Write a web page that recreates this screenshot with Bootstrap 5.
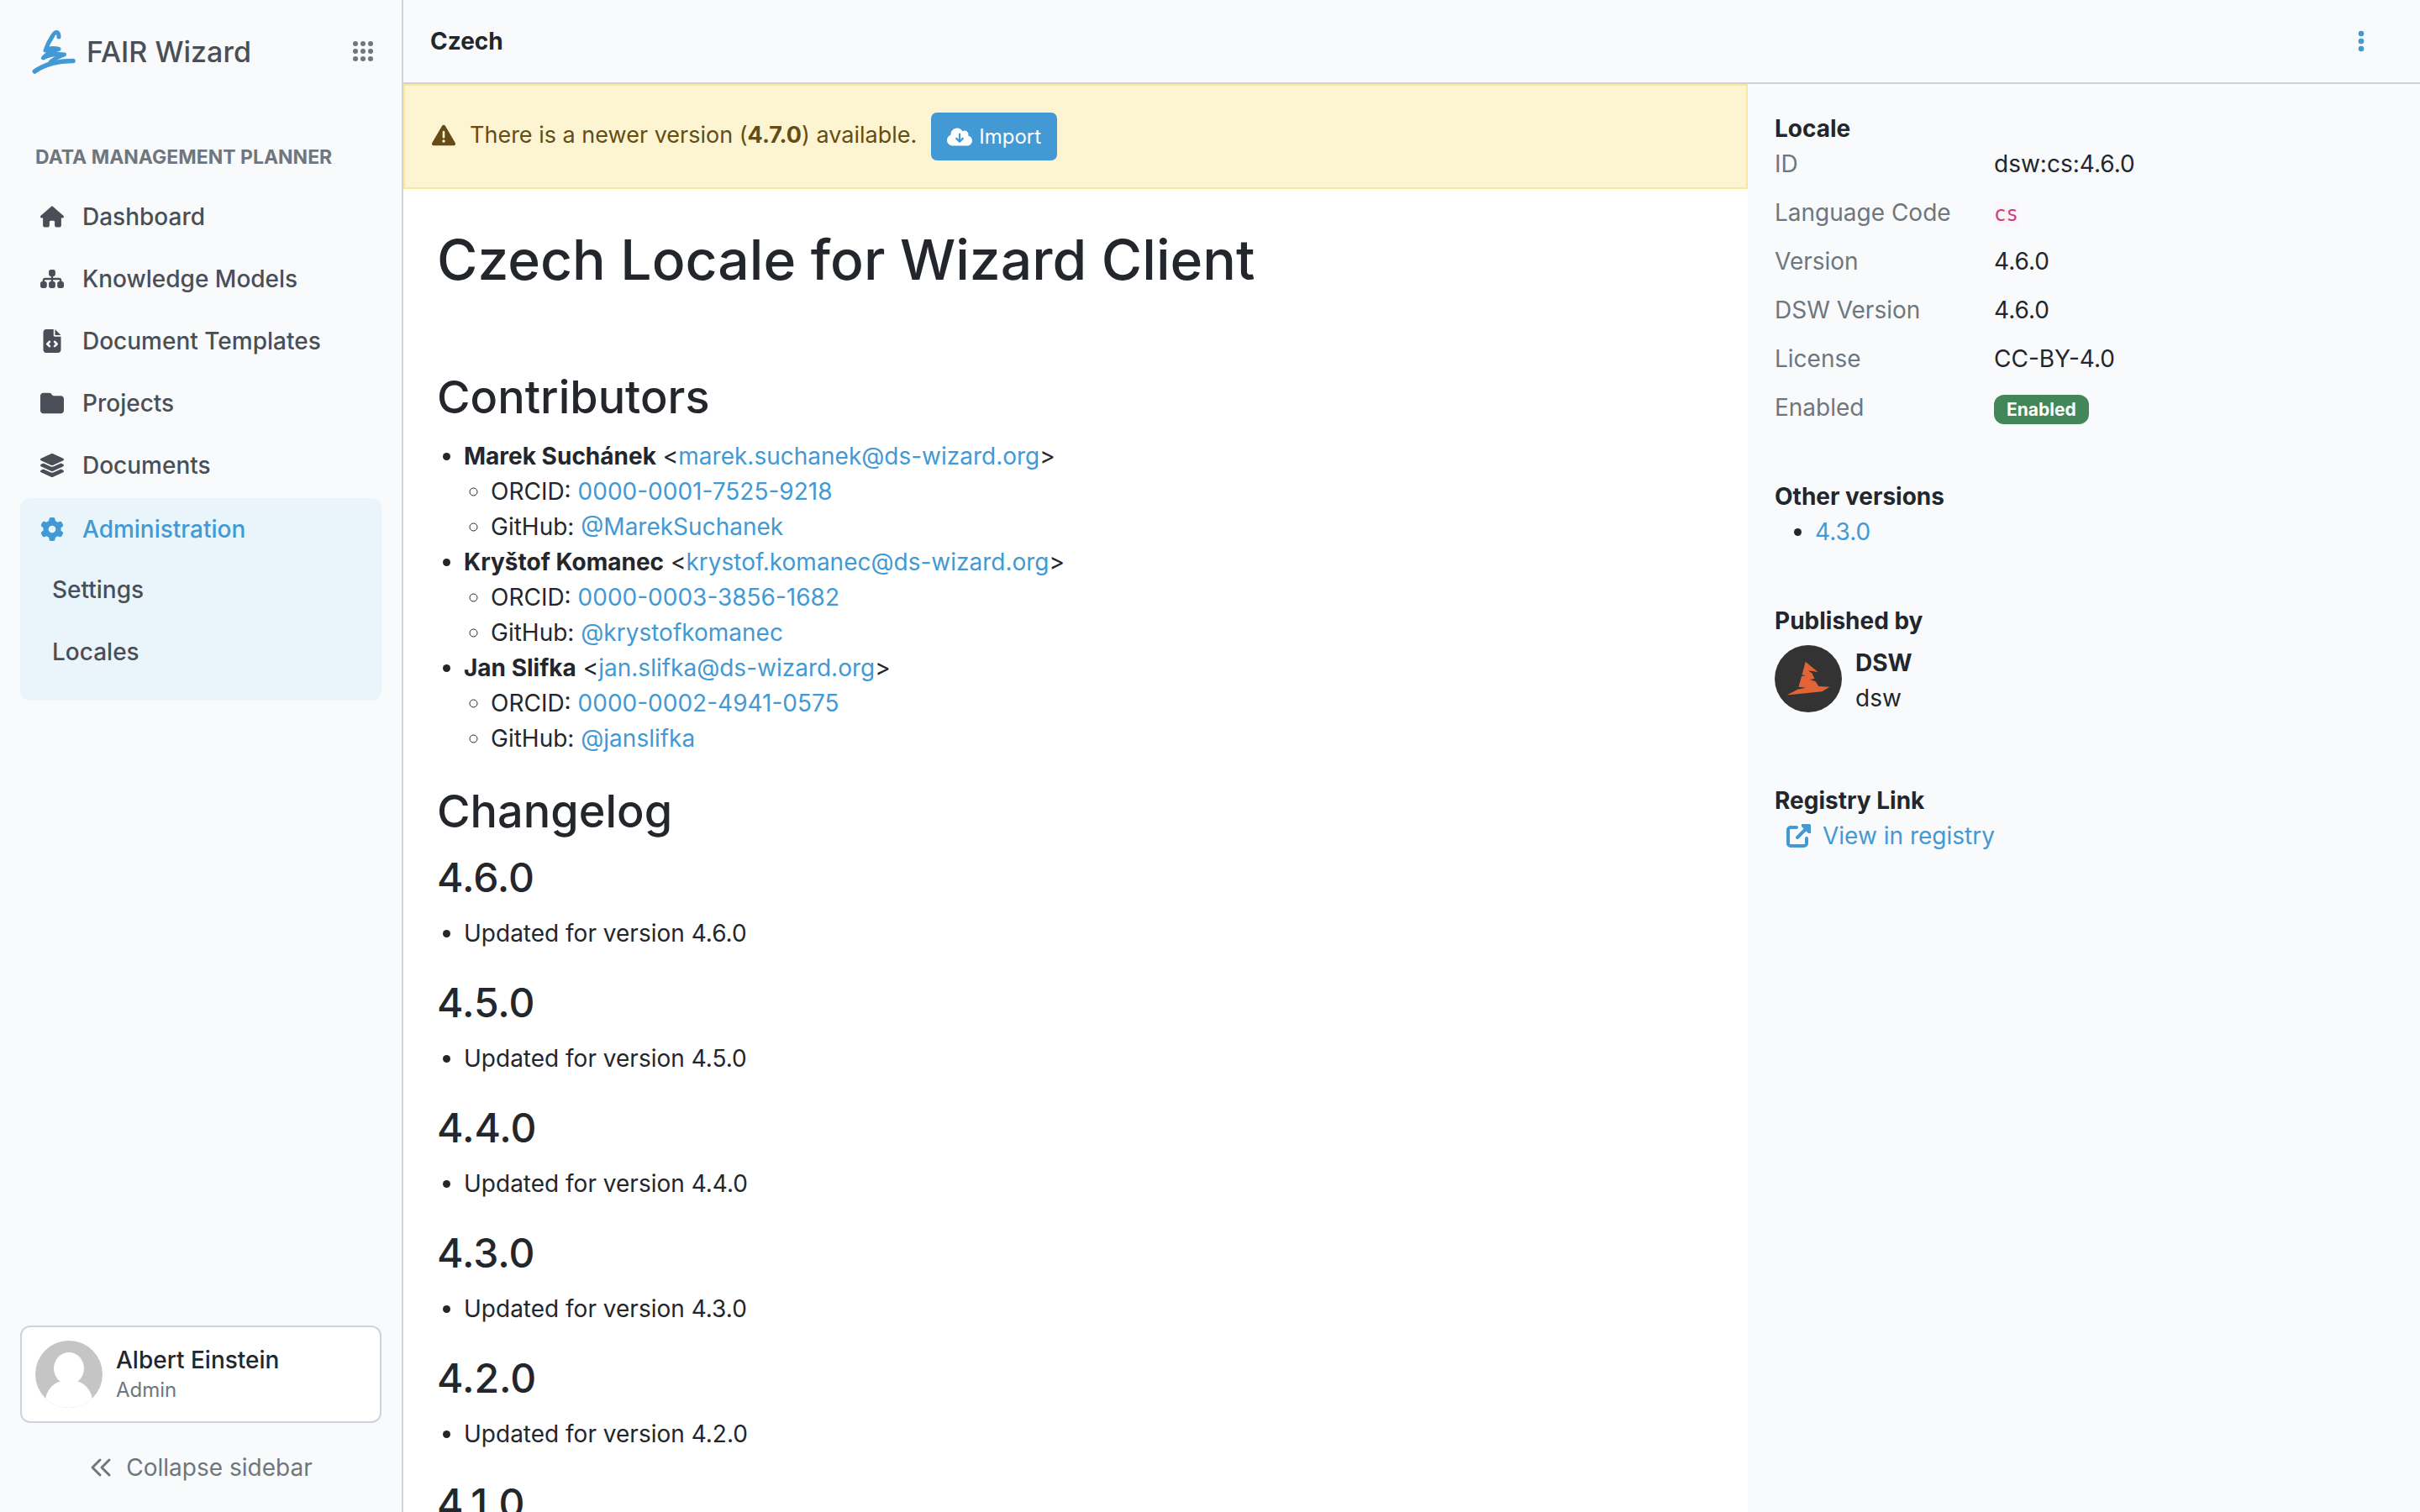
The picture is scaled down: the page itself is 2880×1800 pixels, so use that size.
<!DOCTYPE html>
<html lang="en">
<head>
<meta charset="utf-8">
<meta name="viewport" content="width=device-width, initial-scale=1">
<title>Czech | FAIR Wizard</title>
<link href="https://cdn.jsdelivr.net/npm/bootstrap@5.3.0/dist/css/bootstrap.min.css" rel="stylesheet">
<style>
:root{--fw-blue:#4299d3;--fw-ink:#23262b;--fw-gray:#6e767e;--fw-line:#ced3db;--fw-bg:#f8fafc}
html{font-size:32px}
body{font-family:Inter,"Liberation Sans",sans-serif;font-size:28px;line-height:42px;color:var(--fw-ink);background:#fff}
a{color:var(--fw-blue);text-decoration:none}
svg{display:block;fill:currentColor;flex:none}
h1{font-size:66px;line-height:84px;margin-bottom:88px}
h2{font-size:54px;line-height:67px}
h3{font-size:48px;line-height:59px}
.side-bar{width:480px;border-right:2px solid var(--fw-line);background:var(--fw-bg);padding:0 24px 32px}
.brand-row{height:124px;padding:0 8px 0 14px}
.brand-name{font-size:34px;font-weight:500;color:#4a4f57;margin-left:13px}
.plain-btn{background:none;border:0;padding:0;color:var(--fw-gray)}
.side-title{font-size:23px;line-height:34px;font-weight:700;color:var(--fw-gray);padding-left:18px;margin:46px 0 17px}
.side-link{display:flex;align-items:center;gap:22px;padding:16px 24px;color:#4a4f57;font-weight:500}
.side-link svg{width:28px;height:28px}
.side-group{background:#e9f5fb;border-radius:12px;margin-top:2px;padding-bottom:19px}
.side-group .now{color:var(--fw-blue)}
.sub-link{display:block;padding:14px 38px 18px;color:#4a4f57;font-weight:500}
.user-card{border:2px solid var(--fw-line);border-radius:12px;background:#fff;padding:16px;color:var(--fw-ink)}
.user-name{font-weight:500;line-height:38px}
.user-role{font-size:24px;line-height:34px;color:var(--fw-gray)}
.collapse-btn{color:var(--fw-gray);margin-top:32px}
.top-head{height:100px;border-bottom:2px solid var(--fw-line);background:var(--fw-bg);padding:0 60px 0 32px}
.top-head .plain-btn{color:var(--fw-blue)}
.main-area{min-width:0}
.news-alert{background:#fdf4d1;border:2px solid #f9e6a2;border-radius:0;color:#634d15;padding:32px;gap:17px;margin:0}
.news-text{font-size:27px;gap:17px;padding-bottom:4px}
.news-alert strong{font-weight:700}
.btn-import{background:var(--fw-blue);color:#fff;border:0;border-radius:7px;font-size:24px;line-height:37px;padding:10px 19px;gap:8px}
.btn-import:hover{background:#3585bd;color:#fff}
.readme{padding:42px 40px 0}
.readme ul{padding-left:32px}
.detail-pane{background:var(--fw-bg);padding:32px}
.detail-pane h6{font-size:28px;line-height:42px;font-weight:700;margin:0}
.props{display:grid;grid-template-columns:261px 1fr;grid-auto-rows:42px;row-gap:16px;margin:0 0 64px}
.props dt{font-weight:400;color:var(--fw-gray)}
.props dd{margin:0}
.props code{font-size:24px;color:#c9417f;background:#fbf5f9;font-family:"DejaVu Sans Mono",monospace}
.badge-on{background:#438658;font-size:21px;line-height:21px;padding:7px 15px;border-radius:12px}
.ver-list{padding-left:48px;margin:0 0 64px}
.org-row{gap:16px;margin:8px 0 80px}
.ext-link{padding-left:14px;gap:14px}
</style>
</head>
<body class="d-flex vh-100 overflow-hidden">
<aside class="side-bar d-flex flex-column flex-shrink-0">
  <div class="brand-row d-flex align-items-center">
    <svg width="52" height="54" viewBox="0 0 52 54" fill="none" style="fill:none" stroke="#4299d3" stroke-width="5" stroke-linecap="round" stroke-linejoin="round"><path d="M32 9C32 2 28 2 25 7C21 13 18 19 16 25C20 22 27 22 32 23.500C26 25 17 29 13.500 34C21 30 31 29 38.500 30C33 32 26 35 22 39"/><path d="M3.300 50C16 41 30 37.500 49 37.500" stroke-width="5.500"/></svg>
    <span class="brand-name">FAIR Wizard</span>
    <button class="plain-btn ms-auto" aria-label="Apps"><svg width="28" height="28" viewBox="0 0 28 28"><circle cx="5" cy="4" r="3"/><circle cx="14" cy="4" r="3"/><circle cx="23" cy="4" r="3"/><circle cx="5" cy="13" r="3"/><circle cx="14" cy="13" r="3"/><circle cx="23" cy="13" r="3"/><circle cx="5" cy="22" r="3"/><circle cx="14" cy="22" r="3"/><circle cx="23" cy="22" r="3"/></svg></button>
  </div>
  <div class="side-title">DATA MANAGEMENT PLANNER</div>
  <nav>
    <a class="side-link" href="#"><svg viewBox="0 0 576 512"><path d="M575.800 255.500c0 18-15 32.100-32 32.100h-32l.7 160.200c0 2.700-.2 5.400-.5 8.100V472c0 22.100-17.900 40-40 40H456c-1.100 0-2.200 0-3.300-.1c-1.400 .1-2.800 .1-4.200 .1H416 392c-22.100 0-40-17.900-40-40V448 384c0-17.700-14.300-32-32-32H256c-17.700 0-32 14.300-32 32v64 24c0 22.100-17.900 40-40 40H160 128.100c-1.500 0-3-.1-4.500-.2c-1.200 .1-2.400 .2-3.600 .2H104c-22.100 0-40-17.900-40-40V360c0-.9 0-1.900 .1-2.800V287.600H32c-18 0-32-14-32-32.100c0-9 3-17 10-24L266.400 8c7-7 15-8 22-8s15 2 21 7L564.800 231.500c8 7 12 15 11 24z"/></svg>Dashboard</a>
    <a class="side-link" href="#"><svg viewBox="0 0 576 512"><path d="M208 80c0-26.500 21.500-48 48-48h64c26.500 0 48 21.500 48 48v64c0 26.500-21.500 48-48 48h-8v40H464c30.900 0 56 25.100 56 56v32h8c26.500 0 48 21.500 48 48v64c0 26.500-21.500 48-48 48H464c-26.500 0-48-21.500-48-48V368c0-26.500 21.500-48 48-48h8V288c0-4.400-3.600-8-8-8H312v40h8c26.500 0 48 21.500 48 48v64c0 26.500-21.500 48-48 48H256c-26.500 0-48-21.500-48-48V368c0-26.500 21.500-48 48-48h8V280H112c-4.400 0-8 3.600-8 8v32h8c26.500 0 48 21.500 48 48v64c0 26.500-21.500 48-48 48H48c-26.500 0-48-21.500-48-48V368c0-26.500 21.500-48 48-48h8V288c0-30.900 25.100-56 56-56H264V192h-8c-26.500 0-48-21.500-48-48V80z"/></svg>Knowledge Models</a>
    <a class="side-link" href="#"><svg viewBox="0 0 384 512"><path d="M64 0C28.700 0 0 28.700 0 64V448c0 35.300 28.700 64 64 64H320c35.300 0 64-28.700 64-64V160H256c-17.700 0-32-14.300-32-32V0H64zM256 0V128H384L256 0zM153 289l-31 31 31 31c9.400 9.400 9.400 24.600 0 33.900s-24.600 9.400-33.900 0L71 337c-9.400-9.400-9.400-24.600 0-33.900l48-48c9.400-9.400 24.600-9.400 33.900 0s9.400 24.600 0 33.900zM265 255l48 48c9.400 9.400 9.400 24.600 0 33.900l-48 48c-9.400 9.400-24.600 9.400-33.900 0s-9.400-24.600 0-33.900l31-31-31-31c-9.400-9.400-9.400-24.600 0-33.900s24.600-9.400 33.900 0z" fill-rule="evenodd"/></svg>Document Templates</a>
    <a class="side-link" href="#"><svg viewBox="0 0 512 512"><path d="M64 480H448c35.300 0 64-28.700 64-64V160c0-35.300-28.700-64-64-64H288c-10.100 0-19.600-4.700-25.600-12.800L243.200 57.600C231.100 41.500 212.100 32 192 32H64C28.700 32 0 60.700 0 96V416c0 35.300 28.700 64 64 64z"/></svg>Projects</a>
    <a class="side-link" href="#"><svg viewBox="32 0 512 512"><path d="M264.500 5.200c14.900-6.900 32.100-6.900 47 0l218.600 101c8.500 3.900 13.900 12.400 13.900 21.800s-5.400 17.900-13.900 21.800l-218.600 101c-14.900 6.900-32.100 6.900-47 0L45.900 149.800C37.400 145.800 32 137.300 32 128s5.400-17.900 13.900-21.800L264.500 5.200zM476.900 209.600l53.200 24.600c8.500 3.900 13.900 12.400 13.900 21.800s-5.400 17.900-13.900 21.800l-218.600 101c-14.900 6.900-32.100 6.900-47 0L45.900 277.800C37.400 273.800 32 265.300 32 256s5.400-17.900 13.900-21.800l53.200-24.600 152 70.200c23.400 10.800 50.400 10.800 73.800 0l152-70.200zm-152 198.200l152-70.200 53.200 24.600c8.500 3.900 13.900 12.400 13.900 21.800s-5.400 17.900-13.900 21.800l-218.600 101c-14.900 6.900-32.100 6.900-47 0L45.900 405.800C37.400 401.800 32 393.300 32 384s5.400-17.900 13.900-21.800l53.200-24.600 152 70.200c23.400 10.800 50.400 10.800 73.800 0z"/></svg>Documents</a>
    <div class="side-group">
      <a class="side-link now" href="#"><svg viewBox="0 0 512 512"><path d="M495.900 166.600c3.200 8.700 .5 18.400-6.400 24.600l-43.300 39.400c1.100 8.300 1.700 16.800 1.700 25.400s-.6 17.100-1.700 25.400l43.300 39.400c6.900 6.200 9.600 15.900 6.400 24.600c-4.400 11.900-9.700 23.300-15.800 34.300l-4.700 8.100c-6.600 11-14 21.400-22.100 31.200c-5.900 7.200-15.700 9.600-24.500 6.800l-55.700-17.700c-13.400 10.300-28.200 18.900-44 25.400l-12.500 57.100c-2 9.100-9 16.300-18.200 17.800c-13.800 2.300-28 3.500-42.500 3.500s-28.700-1.200-42.500-3.500c-9.200-1.500-16.200-8.700-18.200-17.800l-12.500-57.100c-15.800-6.500-30.600-15.100-44-25.400L83.100 425.900c-8.800 2.800-18.600 .3-24.500-6.800c-8.100-9.800-15.500-20.200-22.100-31.200l-4.700-8.100c-6.100-11-11.400-22.400-15.800-34.300c-3.200-8.700-.5-18.400 6.400-24.600l43.300-39.400C64.600 273.100 64 264.600 64 256s.6-17.100 1.700-25.400L22.400 191.200c-6.900-6.200-9.600-15.900-6.400-24.600c4.400-11.900 9.700-23.300 15.800-34.300l4.700-8.100c6.600-11 14-21.400 22.100-31.200c5.900-7.200 15.700-9.600 24.500-6.800l55.700 17.700c13.400-10.300 28.200-18.900 44-25.400l12.500-57.100c2-9.100 9-16.300 18.200-17.800C227.300 1.200 241.500 0 256 0s28.700 1.200 42.500 3.500c9.200 1.500 16.200 8.700 18.200 17.800l12.500 57.100c15.800 6.500 30.600 15.100 44 25.400l55.700-17.700c8.800-2.800 18.600-.3 24.500 6.800c8.100 9.800 15.500 20.200 22.100 31.200l4.700 8.100c6.100 11 11.400 22.400 15.800 34.300zM256 336a80 80 0 1 0 0-160 80 80 0 1 0 0 160z"/></svg>Administration</a>
      <a class="sub-link" href="#">Settings</a>
      <a class="sub-link" href="#">Locales</a>
    </div>
  </nav>
  <a class="user-card d-flex align-items-center mt-auto" href="#">
    <svg width="80" height="80" viewBox="0 0 80 80"><clipPath id="av"><circle cx="40" cy="40" r="40"/></clipPath><g clip-path="url(#av)"><path fill="#c5c5c5" d="M0 0h80v80H0z"/><path fill="#fff" d="M31 48C17 52 11 63 11 80h58c0-17-6-28-20-32z"/><ellipse cx="40" cy="33" rx="18" ry="19" fill="#fff"/></g></svg>
    <span class="ms-2"><span class="user-name d-block">Albert Einstein</span><span class="user-role d-block">Admin</span></span>
  </a>
  <button class="plain-btn collapse-btn d-flex align-items-center justify-content-center"><svg class="me-2" width="28" height="28" viewBox="0 0 28 28" style="fill:none" stroke="currentColor" stroke-width="3" stroke-linecap="round" stroke-linejoin="round"><path d="M13 5L4 14l9 9M24 5l-9 9 9 9"/></svg>Collapse sidebar</button>
</aside>
<div class="main-area flex-grow-1 d-flex flex-column">
  <header class="top-head d-flex align-items-center justify-content-between flex-shrink-0">
    <strong>Czech</strong>
    <button class="plain-btn" aria-label="Actions"><svg width="20" height="28" viewBox="0 0 20 28"><circle cx="10" cy="5" r="3.300"/><circle cx="10" cy="14" r="3.300"/><circle cx="10" cy="23" r="3.300"/></svg></button>
  </header>
  <div class="row g-0 flex-grow-1 overflow-hidden">
    <main class="col-8 h-100 overflow-hidden">
      <div class="alert news-alert d-flex align-items-center">
        <div class="news-text d-flex align-items-center">
          <svg width="28" height="28" viewBox="0 0 512 512"><path d="M256 32c14.200 0 27.300 7.500 34.500 19.800l216 368c7.300 12.400 7.300 27.700 .2 40.100S486.300 480 472 480H40c-14.300 0-27.600-7.700-34.700-20.100s-7-27.800 .2-40.100l216-368C228.700 39.500 241.800 32 256 32zm0 128c-13.300 0-24 10.700-24 24V296c0 13.300 10.700 24 24 24s24-10.700 24-24V184c0-13.300-10.700-24-24-24zm32 224a32 32 0 1 0 -64 0 32 32 0 1 0 64 0z"/></svg>
          <span>There is a newer version (<strong>4.7.0</strong>) available.</span>
        </div>
        <button class="btn btn-import d-flex align-items-center"><svg width="30" height="24" viewBox="0 0 640 512"><path d="M144 480C64.500 480 0 415.500 0 336c0-62.800 40.200-116.200 96.200-135.900c-.1-2.700-.2-5.400-.2-8.100c0-88.400 71.600-160 160-160c59.300 0 111 32.200 138.700 80.200C409.900 102 428.300 96 448 96c53 0 96 43 96 96c0 12.200-2.300 23.800-6.400 34.600C596 238.400 640 290.100 640 352c0 70.700-57.300 128-128 128H144zm79-167l80 80c9.400 9.400 24.600 9.400 33.900 0l80-80c9.400-9.400 9.400-24.600 0-33.900s-24.600-9.400-33.900 0l-39 39V184c0-13.300-10.700-24-24-24s-24 10.700-24 24V318.100l-39-39c-9.400-9.400-24.600-9.400-33.900 0s-9.400 24.600 0 33.900z"/></svg>Import</button>
      </div>
      <article class="readme">
        <h1>Czech Locale for Wizard Client</h1>
        <h2>Contributors</h2>
        <ul>
          <li><strong>Marek Suchánek</strong> &lt;<a href="#">marek.suchanek@ds-wizard.org</a>&gt;
            <ul><li>ORCID: <a href="#">0000-0001-7525-9218</a></li><li>GitHub: <a href="#">@MarekSuchanek</a></li></ul></li>
          <li><strong>Kryštof Komanec</strong> &lt;<a href="#">krystof.komanec@ds-wizard.org</a>&gt;
            <ul><li>ORCID: <a href="#">0000-0003-3856-1682</a></li><li>GitHub: <a href="#">@krystofkomanec</a></li></ul></li>
          <li><strong>Jan Slifka</strong> &lt;<a href="#">jan.slifka@ds-wizard.org</a>&gt;
            <ul><li>ORCID: <a href="#">0000-0002-4941-0575</a></li><li>GitHub: <a href="#">@janslifka</a></li></ul></li>
        </ul>
        <h2>Changelog</h2>
        <h3>4.6.0</h3>
        <ul><li>Updated for version 4.6.0</li></ul>
        <h3>4.5.0</h3>
        <ul><li>Updated for version 4.5.0</li></ul>
        <h3>4.4.0</h3>
        <ul><li>Updated for version 4.4.0</li></ul>
        <h3>4.3.0</h3>
        <ul><li>Updated for version 4.3.0</li></ul>
        <h3>4.2.0</h3>
        <ul><li>Updated for version 4.2.0</li></ul>
        <h3>4.1.0</h3>
      </article>
    </main>
    <section class="col-4 detail-pane h-100">
      <h6>Locale</h6>
      <dl class="props">
        <dt>ID</dt><dd>dsw:cs:4.6.0</dd>
        <dt>Language Code</dt><dd><code>cs</code></dd>
        <dt>Version</dt><dd>4.6.0</dd>
        <dt>DSW Version</dt><dd>4.6.0</dd>
        <dt>License</dt><dd>CC-BY-4.0</dd>
        <dt>Enabled</dt><dd><span class="badge badge-on">Enabled</span></dd>
      </dl>
      <h6>Other versions</h6>
      <ul class="ver-list"><li><a href="#">4.3.0</a></li></ul>
      <h6>Published by</h6>
      <div class="org-row d-flex">
        <svg width="80" height="80" viewBox="0 0 80 80"><circle cx="40" cy="40" r="40" fill="#333"/><path fill="#e26336" d="M36.700 19.700L51.500 32 40 30.300 44.700 33.700 47.500 40 42 41 48.700 43.300 52.300 49 65.500 49.700 56.300 55.300 14.500 59.500 27.300 52.700 37 50.700 28.500 49.700 32 37 37 36.300 32.500 35.300z"/></svg>
        <div><strong class="d-block">DSW</strong><span class="d-block">dsw</span></div>
      </div>
      <h6>Registry Link</h6>
      <a class="ext-link d-flex align-items-center" href="#"><svg width="29" height="28" viewBox="0 0 29 28"><path d="M12 4H5a3 3 0 0 0-3 3v16a3 3 0 0 0 3 3h16a3 3 0 0 0 3-3v-6M13 16L25 4" style="fill:none" stroke="currentColor" stroke-width="4" stroke-linecap="round"/><path d="M18 0h9.500a1.500 1.500 0 0 1 1.500 1.500V11l-3 0-8-8z"/></svg>View in registry</a>
    </section>
  </div>
</div>
<script src="https://cdn.jsdelivr.net/npm/bootstrap@5.3.0/dist/js/bootstrap.bundle.min.js"></script>
</body>
</html>
